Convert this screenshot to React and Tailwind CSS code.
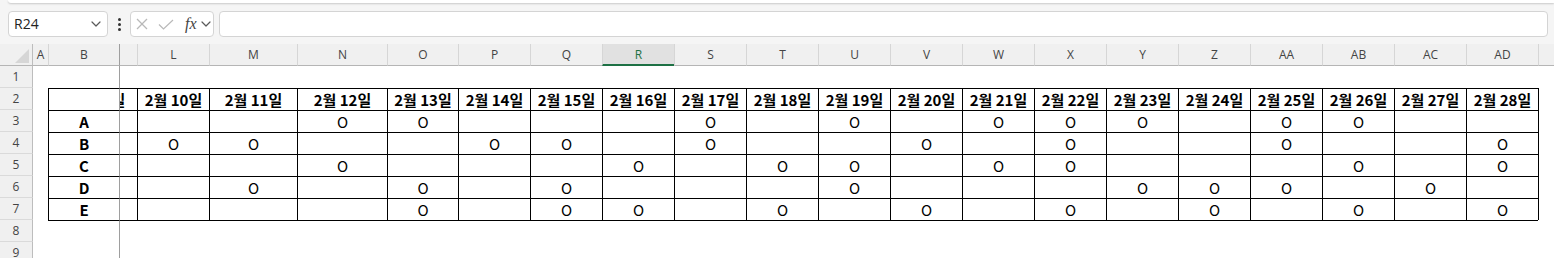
import React from "react";

const GRID =
  "grid grid-cols-[33px_15px_71px_18px_72px_88px_90px_71px_72px_72px_72px_72px_72px_72px_72px_72px_72px_72px_72px_72px_72px_72px_72px_1fr] h-[22px]";

const letters = ["L","M","N","O","P","Q","R","S","T","U","V","W","X","Y","Z","AA","AB","AC","AD"];
const days = ["10","11","12","13","14","15","16","17","18","19","20","21","22","23","24","25","26","27","28"];

const marks = {
  A: ["N","O","S","U","W","X","Y","AA","AB"],
  B: ["L","M","P","Q","S","V","X","AA","AD"],
  C: ["N","R","T","U","W","X","AB","AD"],
  D: ["M","O","Q","U","Y","Z","AA","AC"],
  E: ["O","Q","R","T","V","X","Z","AB","AD"],
};

const rowLabels = { 3: "A", 4: "B", 5: "C", 6: "D", 7: "E" };

function Chevron({ className }) {
  return (
    <svg className={className} width="10" height="6" viewBox="0 0 10 6" fill="none">
      <polyline points="1,1 5,5 9,1" stroke="#5a5a5a" strokeWidth="1.2" strokeLinecap="round" strokeLinejoin="round" />
    </svg>
  );
}

function FormulaBar() {
  return (
    <div className="h-[44px] bg-[#f5f5f5] flex flex-col">
      <div className="h-[3px] ml-[8px] bg-white rounded-bl-[6px] shadow-[0_1px_2px_rgba(0,0,0,0.18)]" />
      <div className="flex items-center mt-[8px] h-[26px]">
        <div className="ml-[8px] w-[100px] h-[26px] bg-white border border-[#d4d4d4] rounded-[4px] flex items-center justify-between pl-[5px] pr-[6px]">
          <span className="font-['Open_Sans',sans-serif] text-[14px] text-[#222] leading-none">R24</span>
          <Chevron />
        </div>
        <div className="w-[22px] flex flex-col items-center justify-center gap-[2px]">
          <span className="w-[3px] h-[3px] rounded-full bg-[#333]" />
          <span className="w-[3px] h-[3px] rounded-full bg-[#333]" />
          <span className="w-[3px] h-[3px] rounded-full bg-[#333]" />
        </div>
        <div className="w-[84px] h-[26px] bg-white border border-[#d4d4d4] rounded-[4px] flex items-center pl-[5px]">
          <svg width="12" height="12" viewBox="0 0 12 12" fill="none">
            <line x1="1" y1="1" x2="11" y2="11" stroke="#b9b9b9" strokeWidth="1.2" />
            <line x1="11" y1="1" x2="1" y2="11" stroke="#b9b9b9" strokeWidth="1.2" />
          </svg>
          <svg className="ml-[10px]" width="16" height="11" viewBox="0 0 16 11" fill="none">
            <polyline points="1,5.5 5.5,10 15,1" stroke="#b9b9b9" strokeWidth="1.2" fill="none" />
          </svg>
          <span className="ml-[11px] font-['Liberation_Serif',serif] italic text-[16px] text-[#444] leading-none">fx</span>
          <Chevron className="ml-[4px]" />
        </div>
        <div className="ml-[5px] mr-[6px] flex-1 h-[26px] bg-white border border-[#d4d4d4] rounded-[4px]" />
      </div>
    </div>
  );
}

function HeaderRow() {
  const hc = "border-b border-b-[#b5b5b5] flex items-center justify-center text-[12px] text-[#444] font-['Open_Sans',sans-serif]";
  return (
    <div className={GRID + " bg-[#f0f0f0]"}>
      <div className="border-r border-r-[#bdbdbd] border-b border-b-[#b5b5b5] flex items-end justify-end pr-[3px] pb-[2px]">
        <svg width="14" height="14" viewBox="0 0 14 14">
          <polygon points="14,0 14,14 0,14" fill="#d6d6d6" />
        </svg>
      </div>
      <div className={hc}>A</div>
      <div className={hc + " border-l border-l-[#d6d6d6]"}>B</div>
      <div className={hc + " border-l border-l-[#9e9e9e]"} />
      {letters.map((l) =>
        l === "R" ? (
          <div
            key={l}
            className="border-l border-l-[#d6d6d6] border-b-2 border-b-[#1e7145] bg-[#e1e1e1] flex items-center justify-center text-[12px] text-[#1e7145] font-['Open_Sans',sans-serif] pt-[1px]"
          >
            {l}
          </div>
        ) : (
          <div key={l} className={hc + " border-l border-l-[#d6d6d6]"}>
            {l}
          </div>
        )
      )}
      <div className={hc + " border-l border-l-[#d6d6d6]"} />
    </div>
  );
}

function DataRow({ r }) {
  const inTable = r >= 2 && r <= 7;
  const bottom = r === 8;
  const label = rowLabels[r];
  const top = inTable || bottom ? " border-t border-t-black" : "";
  const left = inTable ? " border-l border-l-black" : "";
  const txt = "flex items-center justify-center text-black font-['Noto_Sans_CJK_KR',sans-serif] leading-none";

  return (
    <div className={GRID + " bg-white"}>
      <div className="bg-[#f0f0f0] border-r border-r-[#bdbdbd] border-b border-b-[#dadada] flex items-center justify-center text-[12px] text-[#444] font-['Open_Sans',sans-serif]">
        {r}
      </div>
      <div />
      <div className={txt + " text-[15px] font-bold" + top + left}>{label || ""}</div>
      <div className={"flex justify-end overflow-hidden border-l border-l-[#9e9e9e]" + top}>
        {r === 2 && (
          <div className={txt + " w-[72px] shrink-0 text-[15px] font-bold"}>2월 9일</div>
        )}
      </div>
      {letters.map((l, i) => {
        let content = null;
        if (r === 2) content = <span className="font-bold">{"2월 " + days[i] + "일"}</span>;
        else if (label && marks[label].includes(l)) content = "O";
        return (
          <div key={l} className={txt + " text-[15px]" + top + left}>
            {content}
          </div>
        );
      })}
      <div className={left} />
    </div>
  );
}

export default function App() {
  const rows = [1, 2, 3, 4, 5, 6, 7, 8, 9];
  return (
    <div className="w-[1554px] h-[258px] overflow-hidden bg-white">
      <FormulaBar />
      <HeaderRow />
      {rows.map((r) => (
        <DataRow key={r} r={r} />
      ))}
    </div>
  );
}
